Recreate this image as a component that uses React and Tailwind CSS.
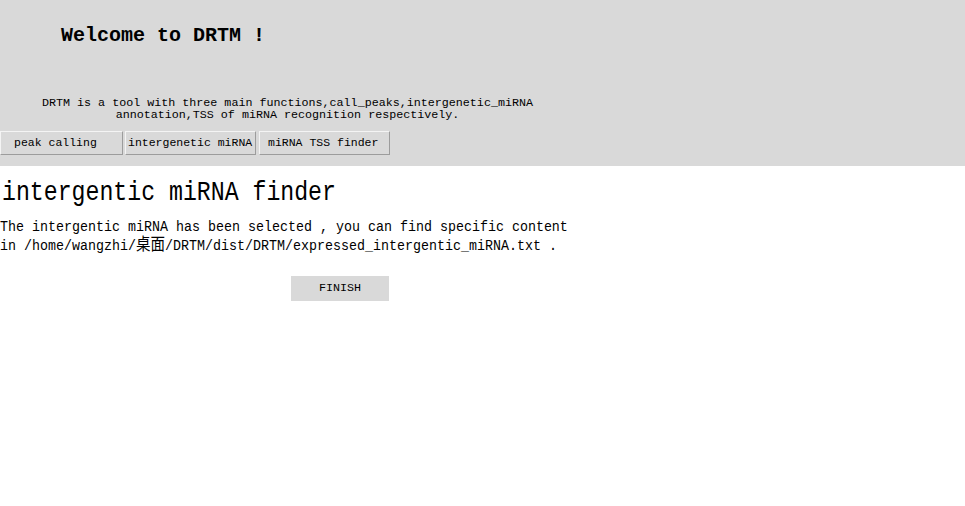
export default function App() {
  const mono = { fontFamily: '"Liberation Mono", "DejaVu Sans Mono", monospace' };
  const btn =
    "h-[24px] bg-[#d9d9d9] border border-t-[#f4f4f4] border-l-[#f4f4f4] border-b-[#9c9c9c] border-r-[#9c9c9c] text-[11.5px] leading-[22px] text-black text-left whitespace-nowrap";
  return (
    <div className="w-[965px] h-[506px] bg-white text-black overflow-hidden" style={mono}>
      <div className="h-[166px] bg-[#d9d9d9] flex flex-col">
        <div className="mt-[24px] ml-[61px] text-[20px] leading-[24px] font-bold whitespace-nowrap">
          Welcome to DRTM !
        </div>
        <div className="mt-[49px] ml-[42px] w-[491px] text-center text-[11.7px] leading-[12px] whitespace-nowrap">
          <div>DRTM is a tool with three main functions,call_peaks,intergenetic_miRNA</div>
          <div>annotation,TSS of miRNA recognition respectively.</div>
        </div>
        <div className="mt-[10px] flex">
          <button className={btn + " w-[123px] pl-[13px]"}>peak calling</button>
          <button className={btn + " w-[131px] ml-[2px] pl-[2px]"}>intergenetic miRNA</button>
          <button className={btn + " w-[131px] ml-[3px] pl-[8px]"}>miRNA TSS finder</button>
        </div>
      </div>
      <div className="mt-[14px] ml-[2px] text-[23.2px] leading-[28px] whitespace-nowrap origin-[0_20px] scale-y-[1.2]">
        intergentic miRNA finder
      </div>
      <div className="mt-[12px] text-[13.33px] leading-[16px] whitespace-nowrap">
        <div className="origin-[0_12px] scale-y-[1.15]">
          The intergentic miRNA has been selected , you can find specific content
        </div>
        <div className="origin-[0_12px] scale-y-[1.15]">
          in /home/wangzhi/
          <span className="text-[14.5px]" style={{ fontFamily: '"Noto Sans CJK SC", sans-serif' }}>
            桌面
          </span>
          /DRTM/dist/DRTM/expressed_intergentic_miRNA.txt .
        </div>
      </div>
      <div className="mt-[21px] ml-[291px] w-[98px] h-[25px] bg-[#d9d9d9] flex items-center justify-center text-[11.7px]">
        FINISH
      </div>
    </div>
  );
}
